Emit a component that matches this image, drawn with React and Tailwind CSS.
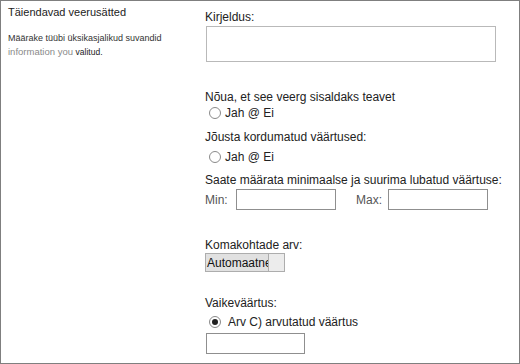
import React from "react";

function Radio({ checked }) {
  return (
    <span className="relative inline-flex h-[12px] w-[12px] items-center justify-center rounded-full border border-[#8a8a8a] bg-white">
      {checked && <span className="h-[6px] w-[6px] rounded-full bg-[#222]" />}
    </span>
  );
}

function Label({ children, className = "" }) {
  return <div className={`h-[16px] text-[12px] leading-[16px] text-[#222] ${className}`}>{children}</div>;
}

export default function App() {
  return (
    <div
      className="flex h-[364px] w-[520px] border border-[#7f7f7f] bg-white"
      style={{ fontFamily: '"Liberation Sans", Arial, sans-serif' }}
    >
      <div className="w-[204px] shrink-0 pl-[7px] pt-[4px]">
        <div className="text-[11px] leading-[14px] text-[#222]">Täiendavad veerusätted</div>
        <div className="mt-[12px] text-[9px] leading-[14px] text-[#333]">
          Määrake tüübi üksikasjalikud suvandid
        </div>
        <div className="text-[9px] leading-[14px]">
          <span className="text-[#8a8a8a] text-[9.5px]">information you </span>
          <span className="text-[#222] text-[8.5px]">valitud.</span>
        </div>
      </div>

      <div className="flex-1 pt-[8px]">
        <Label>Kirjeldus:</Label>
        <textarea className="ml-[1px] mt-[1px] block h-[36px] w-[290px] resize-none border border-[#b9b9b9] outline-none" />

        <Label className="mt-[27px]">Nõua, et see veerg sisaldaks teavet</Label>
        <div className="flex h-[16px] items-center gap-[4px] pl-[4px] text-[12px] text-[#222]">
          <Radio />
          <span>Jah @ Ei</span>
        </div>

        <Label className="mt-[8px]">Jõusta kordumatud väärtused:</Label>
        <div className="mt-[4px] flex h-[16px] items-center gap-[4px] pl-[4px] text-[12px] text-[#222]">
          <Radio />
          <span>Jah @ Ei</span>
        </div>

        <Label className="mt-[7px]">Saate määrata minimaalse ja suurima lubatud väärtuse:</Label>
        <div className="mt-[1px] flex h-[21px] items-center text-[12px] text-[#555]">
          <span className="w-[31px]">Min:</span>
          <input className="h-[21px] w-[100px] border border-[#8f8f8f] outline-none" />
          <span className="ml-[20px] w-[32px]">Max:</span>
          <input className="h-[21px] w-[100px] border border-[#8f8f8f] outline-none" />
        </div>

        <Label className="mt-[27px]">Komakohtade arv:</Label>
        <div className="flex h-[19px] w-[80px] border border-[#adadad] bg-[#e1e1e1]">
          <span className="w-[62px] overflow-visible whitespace-nowrap pl-[1px] text-[12px] leading-[19px] text-[#111]">
            Automaatne
          </span>
          <span className="flex-1 border-l border-[#adadad] bg-[#ececec]" />
        </div>

        <Label className="mt-[23px]">Vaikeväärtus:</Label>
        <div className="mt-[3px] flex h-[16px] items-center gap-[7px] pl-[4px] text-[12px] text-[#222]">
          <Radio checked />
          <span>Arv C) arvutatud väärtus</span>
        </div>
        <input className="ml-[1px] mt-[3px] block h-[21px] w-[99px] border border-[#8f8f8f] outline-none" />
      </div>
    </div>
  );
}
